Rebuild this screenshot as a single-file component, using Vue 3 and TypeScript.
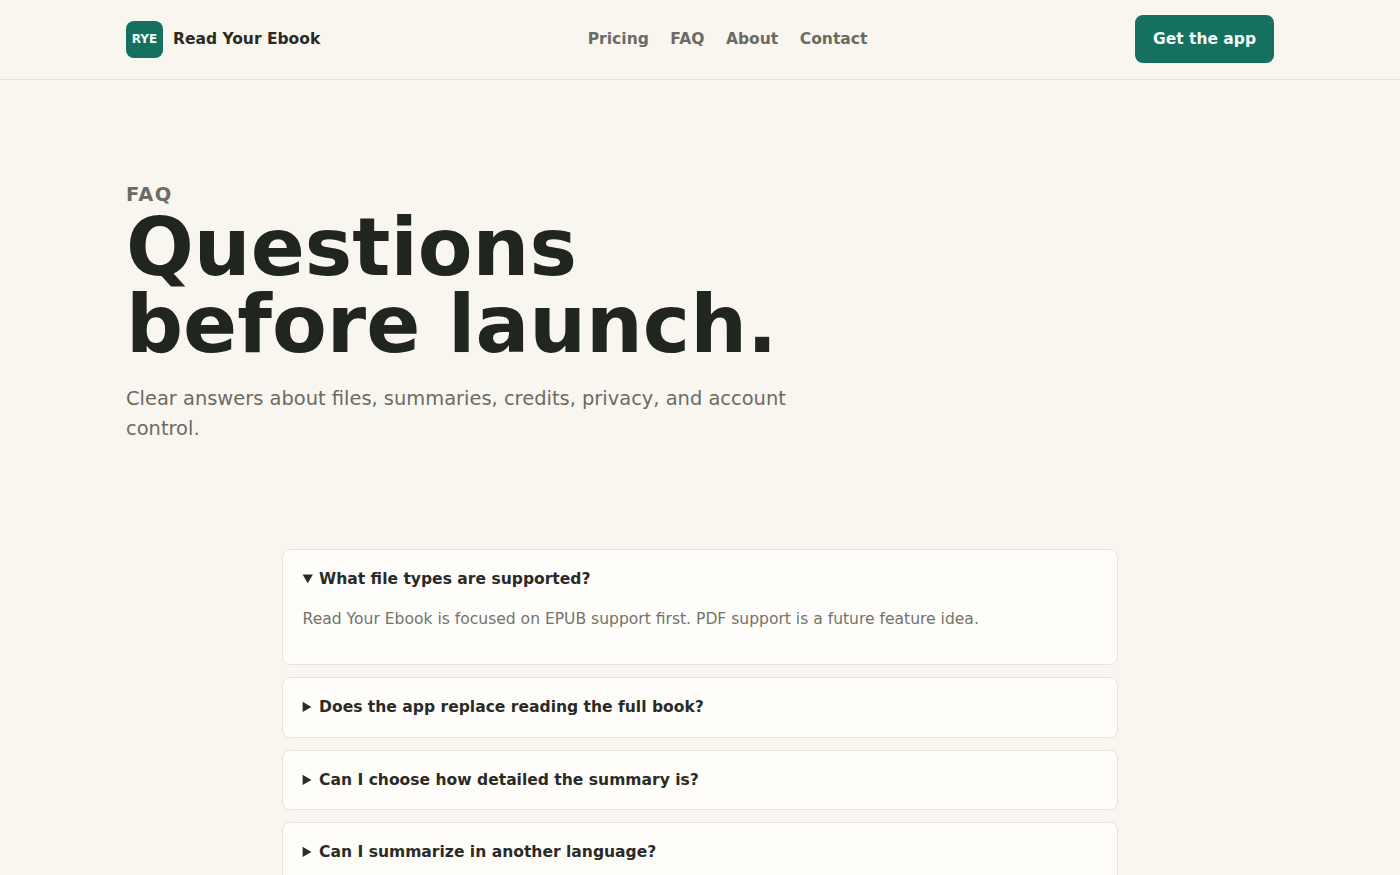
<script setup lang="ts">
interface Faq { q: string; a: string; open?: boolean }
const faqs: Faq[] = [
  { q: 'What file types are supported?', a: 'Read Your Ebook is focused on EPUB support first. PDF support is a future feature idea.', open: true },
  { q: 'Does the app replace reading the full book?', a: 'No. Summaries help you decide what to read and remember it later.' },
  { q: 'Can I choose how detailed the summary is?', a: 'Yes. You can pick the level of detail you want.' },
  { q: 'Can I summarize in another language?', a: 'Yes. Choose a language before generating a summary.' },
  { q: 'How do credits work?', a: 'Credits are used whenever a summary is generated.' }
]
const links = ['Pricing', 'FAQ', 'About', 'Contact']
</script>

<template>
  <div class="page">
    <header class="topbar">
      <div class="bar-inner">
        <a class="brand" href="#">
          <span class="logo">RYE</span>
          <span class="brand-name">Read Your Ebook</span>
        </a>
        <nav class="nav">
          <a v-for="l in links" :key="l" href="#">{{ l }}</a>
        </nav>
        <a class="cta" href="#">Get the app</a>
      </div>
    </header>
    <section class="hero">
      <p class="eyebrow">FAQ</p>
      <h1>Questions<br />before launch.</h1>
      <p class="lede">Clear answers about files, summaries, credits, privacy, and account control.</p>
    </section>
    <section class="faq">
      <details v-for="f in faqs" :key="f.q" class="item" :open="f.open">
        <summary>{{ f.q }}</summary>
        <p>{{ f.a }}</p>
      </details>
    </section>
  </div>
</template>

<style>
html, body { background: #f9f6f0; }
</style>

<style scoped>
.page {
  height: 875px;
  overflow: hidden;
  background: #f9f6f0;
  color: #20231f;
  font-family: "DejaVu Sans", sans-serif;
}
a { text-decoration: none; color: inherit; }
.topbar { border-bottom: 1px solid #e8e4dc; height: 79px; box-sizing: content-box; }
.bar-inner {
  width: 1148px;
  height: 78px;
  margin: 0 auto;
  display: flex;
  justify-content: space-between;
  align-items: center;
}
.brand { display: flex; align-items: center; gap: 10px; }
.logo {
  width: 37px;
  height: 37px;
  border-radius: 8px;
  background: #167060;
  color: #f2fbf7;
  font-size: 12px;
  font-weight: 700;
  display: flex;
  align-items: center;
  justify-content: center;
}
.brand-name { font-size: 15.5px; font-weight: 700; color: #2a2b27; }
.nav { display: flex; gap: 21.5px; }
.nav a { font-size: 15.55px; font-weight: 700; color: #6b6b63; }
.cta {
  width: 139px;
  height: 48px;
  border-radius: 8px;
  background: #167060;
  color: #f2fbf7;
  font-size: 15.5px;
  font-weight: 700;
  display: flex;
  align-items: center;
  justify-content: center;
}
.hero { width: 1148px; margin: 0 auto; padding-top: 103px; }
.eyebrow {
  margin: 0 0 4px;
  font-size: 19.4px;
  line-height: 23px;
  font-weight: 700;
  letter-spacing: 1.3px;
  color: #6b6b63;
}
h1 {
  margin: 0;
  font-size: 79.8px;
  line-height: 76.6px;
  font-weight: 700;
  color: #20261f;
}
.lede {
  margin: 20.4px 0 0;
  width: 680px;
  font-size: 19.45px;
  line-height: 30px;
  color: #6b6b63;
}
.faq {
  width: 836px;
  margin: 105.5px auto 0;
  display: flex;
  flex-direction: column;
  gap: 12px;
}
.item {
  background: #fefdf9;
  border: 1px solid #e8e4dc;
  border-radius: 8px;
  box-sizing: border-box;
}
summary {
  padding: 18px 19.6px;
  font-size: 15.55px;
  line-height: 22.6px;
  font-weight: 700;
  color: #2a2b27;
  cursor: pointer;
}
.item p {
  margin: -0.5px 0 0;
  padding: 0 19.6px 32.9px;
  font-size: 15.55px;
  line-height: 23px;
  color: #73736b;
}
</style>
